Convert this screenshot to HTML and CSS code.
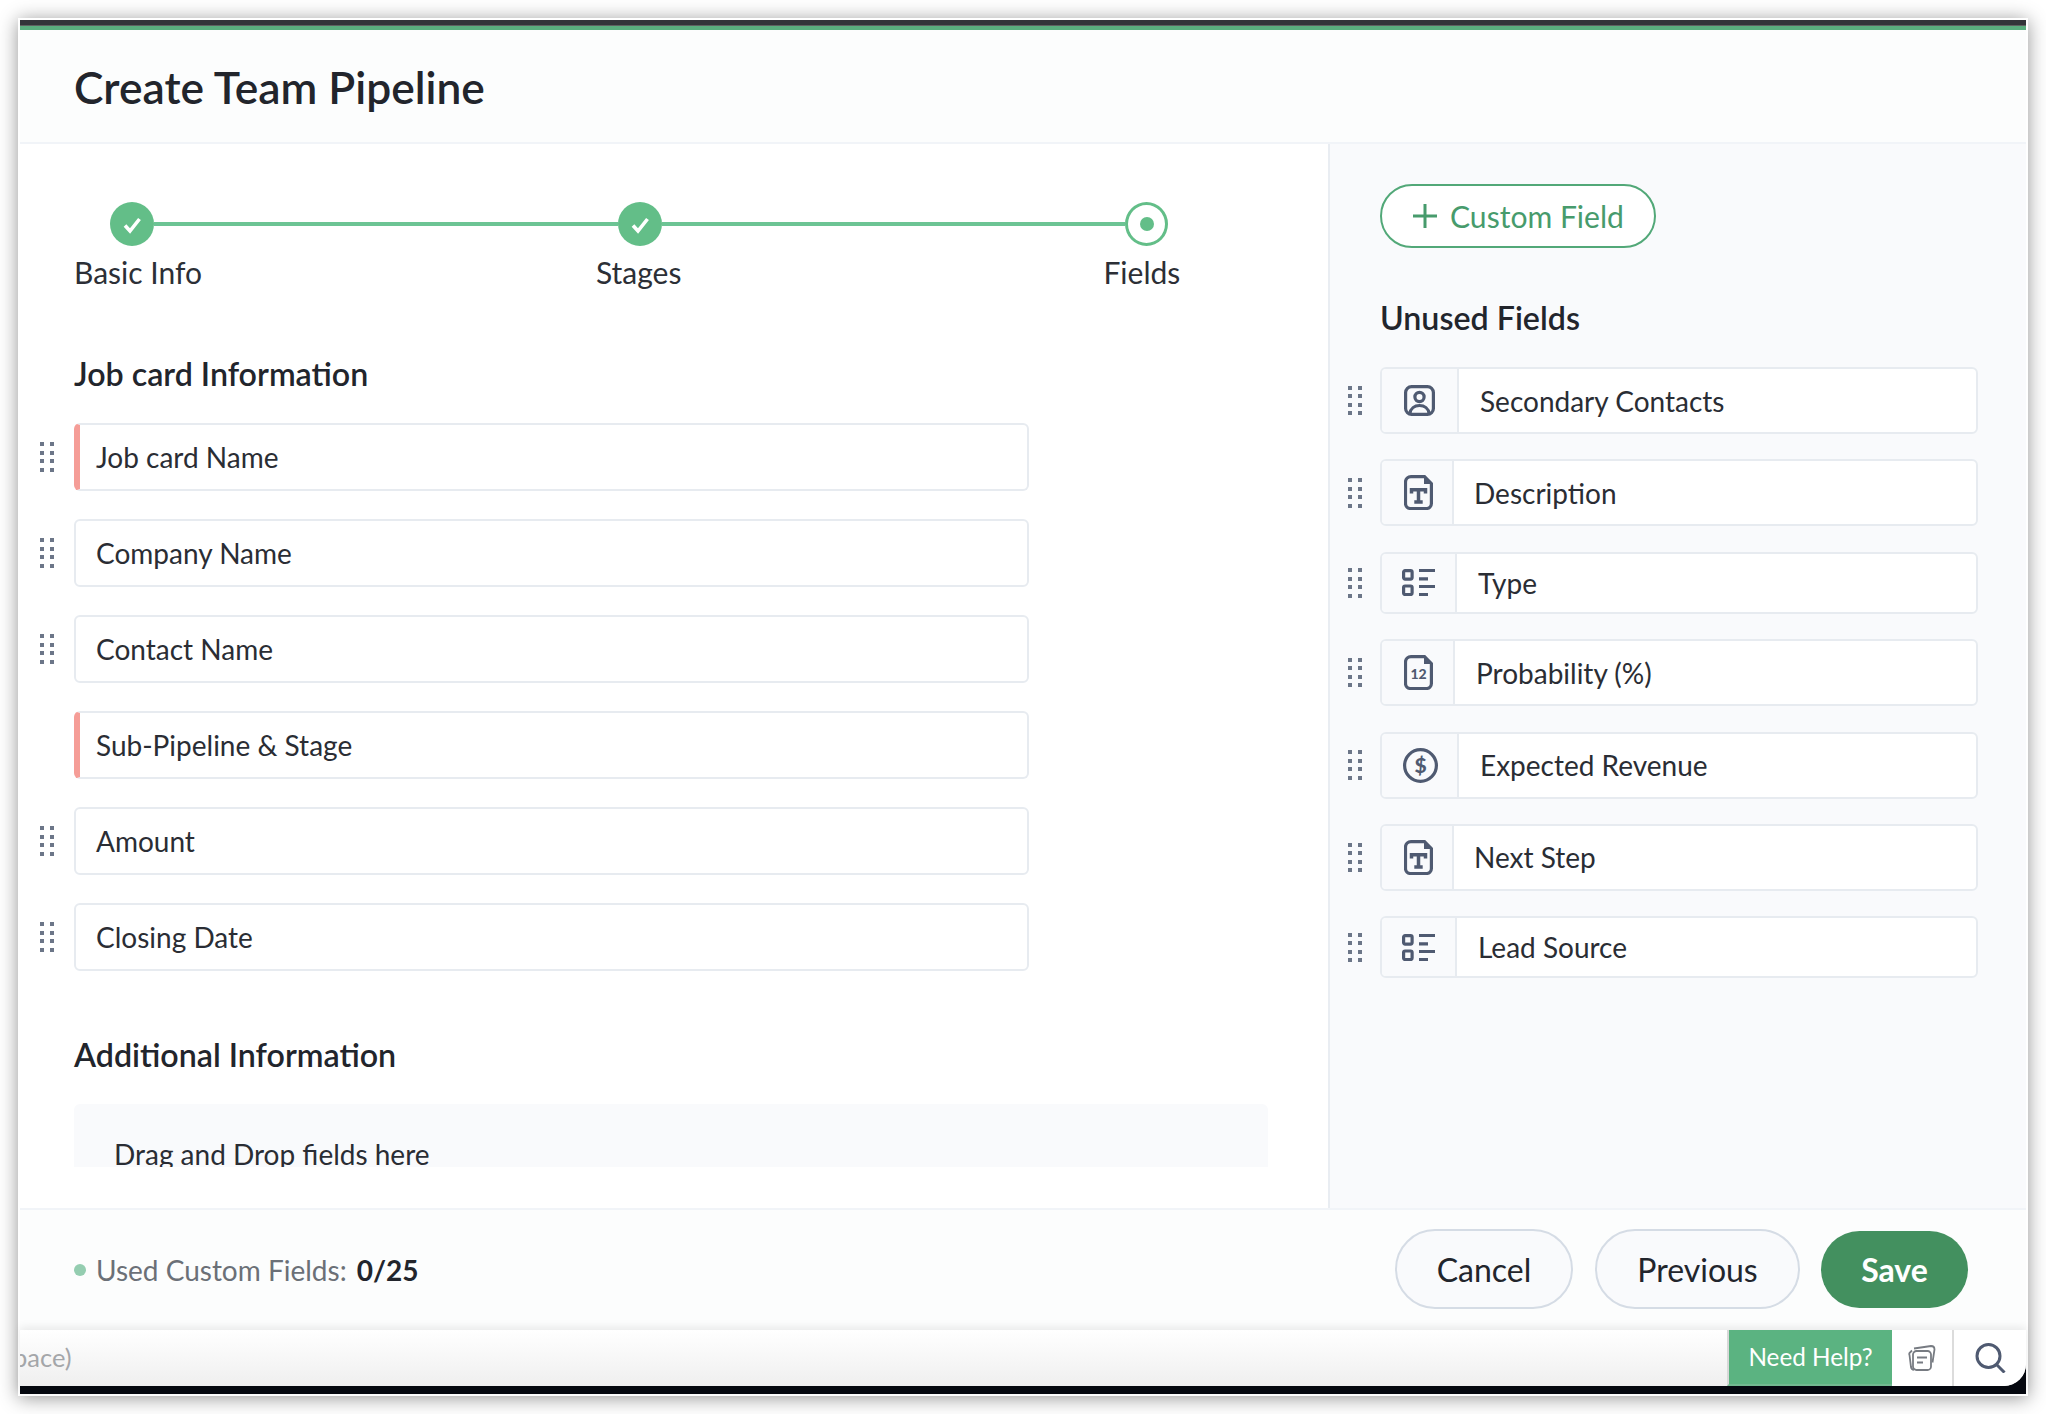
FILE: index.html
```html
<!DOCTYPE html>
<html lang="en">
<head>
<meta charset="utf-8">
<title>Create Team Pipeline</title>
<link rel="stylesheet" href="styles.css">
</head>
<body>
<div class="window">
  <div class="top-strip"></div>
  <header class="header"><h1 class="title">Create Team Pipeline</h1></header>
  <div class="content">
    <main class="main">
      <div class="steps">
        <span class="step"><svg class="step-check" viewBox="0 0 44 44" width="44" height="44"><path d="M15 23.5l5 5.5 9.5-12" fill="none" stroke="#fff" stroke-width="3.6"/></svg></span>
        <span class="step-line"></span>
        <span class="step"><svg class="step-check" viewBox="0 0 44 44" width="44" height="44"><path d="M15 23.5l5 5.5 9.5-12" fill="none" stroke="#fff" stroke-width="3.6"/></svg></span>
        <span class="step-line"></span>
        <span class="step-current"><span class="step-dot"></span></span>
      </div>
      <div class="step-labels">
        <span class="label-basic">Basic Info</span>
        <span class="label-stages">Stages</span>
        <span class="label-fields">Fields</span>
      </div>
      <h2 class="section-title first">Job card Information</h2>
      <div class="field-list">
        <div class="field-row"><span class="handle"><i></i><i></i><i></i><i></i><i></i><i></i><i></i><i></i></span><div class="field required">Job card Name</div></div>
        <div class="field-row"><span class="handle"><i></i><i></i><i></i><i></i><i></i><i></i><i></i><i></i></span><div class="field">Company Name</div></div>
        <div class="field-row"><span class="handle"><i></i><i></i><i></i><i></i><i></i><i></i><i></i><i></i></span><div class="field">Contact Name</div></div>
        <div class="field-row"><span class="handle no-handle"></span><div class="field required">Sub-Pipeline &amp; Stage</div></div>
        <div class="field-row"><span class="handle"><i></i><i></i><i></i><i></i><i></i><i></i><i></i><i></i></span><div class="field">Amount</div></div>
        <div class="field-row"><span class="handle"><i></i><i></i><i></i><i></i><i></i><i></i><i></i><i></i></span><div class="field">Closing Date</div></div>
      </div>
      <h2 class="section-title second">Additional Information</h2>
      <div class="dropzone">Drag and Drop fields here</div>
    </main>
    <aside class="side">
      <button class="custom-btn" type="button">
        <svg viewBox="0 0 24 24" width="24" height="24"><path d="M12 0v24M0 12h24" stroke="#479b6c" stroke-width="3" fill="none"/></svg>
        Custom Field
      </button>
      <h2 class="side-title">Unused Fields</h2>
      <div class="unused-list">
        <div class="unused-row tall"><span class="handle"><i></i><i></i><i></i><i></i><i></i><i></i><i></i><i></i></span>
          <div class="unused"><span class="cell w78"><svg viewBox="0 0 31 31" width="31" height="31" fill="none" stroke="#4f5a71" stroke-width="3.2"><rect x="1.6" y="1.6" width="27.800" height="27.800" rx="6"/><circle cx="15.5" cy="12" r="4.6"/><path d="M6 28.5c.5-5 4.5-8 9.500-8s9 3 9.500 8"/></svg></span><span class="name">Secondary Contacts</span></div></div>
        <div class="unused-row tall"><span class="handle"><i></i><i></i><i></i><i></i><i></i><i></i><i></i><i></i></span>
          <div class="unused"><span class="cell w72"><svg viewBox="0 0 29 35" width="29" height="35" fill="none" stroke="#4f5a71" stroke-width="3.2"><path d="M7 1.600h13.500l6.900 7V28.500a5 5 0 0 1-5 5H6.500a5 5 0 0 1-5-5V7a5.500 5.500 0 0 1 5.500-5.400z"/><path d="M20 1l8 8h-8z" fill="#4f5a71" stroke="none"/><path d="M7.500 18.500v-3.700h14v3.700M14.500 14.800V27M10.300 27h8.400" stroke-width="3.500"/></svg></span><span class="name">Description</span></div></div>
        <div class="unused-row short"><span class="handle"><i></i><i></i><i></i><i></i><i></i><i></i><i></i><i></i></span>
          <div class="unused"><span class="cell w76"><svg viewBox="0 0 33 27" width="33" height="27" fill="none" stroke="#4f5a71" stroke-width="3.200"><rect x="1.600" y="1.600" width="8.500" height="8.500" rx="1.500"/><rect x="1.600" y="17" width="8.500" height="8.500" rx="1.500"/><path d="M17 1.500h16M17 9.800h9M17 17.500h16M17 25.500h9"/></svg></span><span class="name">Type</span></div></div>
        <div class="unused-row tall"><span class="handle"><i></i><i></i><i></i><i></i><i></i><i></i><i></i><i></i></span>
          <div class="unused"><span class="cell w74"><svg viewBox="0 0 29 35" width="29" height="35" fill="none" stroke="#4f5a71" stroke-width="3.2"><path d="M7 1.600h13.500l6.900 7V28.500a5 5 0 0 1-5 5H6.500a5 5 0 0 1-5-5V7a5.500 5.500 0 0 1 5.500-5.400z"/><path d="M20 1l8 8h-8z" fill="#4f5a71" stroke="none"/><text class="icon-num" x="14.500" y="23.500" text-anchor="middle">12</text></svg></span><span class="name">Probability (%)</span></div></div>
        <div class="unused-row tall"><span class="handle"><i></i><i></i><i></i><i></i><i></i><i></i><i></i><i></i></span>
          <div class="unused"><span class="cell w78 shifted"><svg viewBox="0 0 35 35" width="35" height="35" fill="none" stroke="#4f5a71" stroke-width="3.2"><circle cx="17.500" cy="17.500" r="15.900"/><text class="icon-dollar" x="17.500" y="25" text-anchor="middle">$</text></svg></span><span class="name">Expected Revenue</span></div></div>
        <div class="unused-row tall"><span class="handle"><i></i><i></i><i></i><i></i><i></i><i></i><i></i><i></i></span>
          <div class="unused"><span class="cell w72"><svg viewBox="0 0 29 35" width="29" height="35" fill="none" stroke="#4f5a71" stroke-width="3.2"><path d="M7 1.600h13.500l6.900 7V28.500a5 5 0 0 1-5 5H6.500a5 5 0 0 1-5-5V7a5.500 5.500 0 0 1 5.500-5.400z"/><path d="M20 1l8 8h-8z" fill="#4f5a71" stroke="none"/><path d="M7.500 18.500v-3.700h14v3.700M14.500 14.800V27M10.300 27h8.400" stroke-width="3.500"/></svg></span><span class="name">Next Step</span></div></div>
        <div class="unused-row short"><span class="handle"><i></i><i></i><i></i><i></i><i></i><i></i><i></i><i></i></span>
          <div class="unused"><span class="cell w76"><svg viewBox="0 0 33 27" width="33" height="27" fill="none" stroke="#4f5a71" stroke-width="3.200"><rect x="1.600" y="1.600" width="8.500" height="8.500" rx="1.500"/><rect x="1.600" y="17" width="8.500" height="8.500" rx="1.500"/><path d="M17 1.500h16M17 9.800h9M17 17.500h16M17 25.500h9"/></svg></span><span class="name">Lead Source</span></div></div>
      </div>
    </aside>
  </div>
  <footer class="footer">
    <div class="usage"><span class="usage-dot"></span><span class="usage-label">Used Custom Fields:</span><strong class="usage-count">0/25</strong></div>
    <div class="actions">
      <button class="btn btn-cancel" type="button">Cancel</button>
      <button class="btn btn-prev" type="button">Previous</button>
      <button class="btn btn-save" type="button">Save</button>
    </div>
  </footer>
  <div class="taskbar">
    <div class="bar">
      <span class="bar-text">pace)</span>
      <span class="help">Need Help?</span>
      <span class="bar-icon notes"><svg viewBox="0 0 28 26" width="28" height="26" fill="none" stroke="#777b82" stroke-width="1.800"><path d="M6 3.500l17-2.500q3.500 0 3.500 3.500l-2 13"/><path d="M4 5.500 1.500 8q-.5 1 0 2l1.500 12q.5 2.500 3 2.800"/><rect x="5" y="6" width="18" height="19" rx="3.500" fill="#fff"/><path d="M9 12.500h10M9 17.500h6"/></svg></span>
      <span class="bar-icon search"><svg viewBox="0 0 31 30" width="31" height="30" fill="none" stroke="#4f5a71" stroke-width="3"><circle cx="13.500" cy="13" r="11.500"/><path d="M21.500 21.500l8 8"/></svg></span>
    </div>
  </div>
</div>
</body>
</html>
```
FILE: styles.css
```css
* { box-sizing: border-box; }
html, body { margin: 0; height: 100%; }
body {
  padding: 18px 18px 0;
  background: #fff;
  font-family: Lato, "Liberation Sans", sans-serif;
  color: #22252c;
  overflow: hidden;
}
.window {
  width: 2010px;
  height: 1378px;
  border: 2px solid #fff;
  background: #fff;
  display: flex;
  flex-direction: column;
  box-shadow: 0 2px 18px rgba(0, 0, 0, .42);
}
.top-strip {
  height: 10px;
  flex: none;
  background: linear-gradient(#333438 0, #333438 5px, #5f6060 5px, #5f6060 6px, #5aad7d 6px);
}
.header {
  height: 114px;
  flex: none;
  background: #fcfdfd;
  border-bottom: 2px solid #f1f4f8;
  padding-left: 54px;
  display: flex;
  align-items: center;
}
.title { margin: 0; font-size: 44.300px; font-weight: 600; color: #22252c; }
.content { flex: 1; display: flex; min-height: 0; }
.main { width: 1308px; flex: none; padding: 58px 0 0 20px; background: #fff; }
.steps { display: flex; align-items: center; margin-left: 70px; width: 1058px; height: 44px; }
.step { width: 44px; height: 44px; border-radius: 50%; background: #63be88; flex: none; display: block; }
.step-check { display: block; }
.step-line { height: 4px; flex: 1; background: #6cc494; }
.step-current {
  width: 43px; height: 44px; border-radius: 50%; flex: none;
  border: 3.500px solid #63be88; background: #fff;
  display: flex; align-items: center; justify-content: center;
}
.step-dot { width: 14px; height: 14px; border-radius: 50%; background: #63be88; }
.step-labels { display: flex; margin: 8px 0 0 34px; font-size: 30px; line-height: 36px; color: #2c2f36; }
.label-stages { margin-left: 394px; }
.label-fields { margin-left: 422px; }
.section-title { margin: 0 0 0 34px; font-size: 32.200px; line-height: 40px; font-weight: 600; color: #22252c; }
.section-title.first { margin-top: 64px; }
.section-title.second { margin-top: 64px; }
.field-list { display: flex; flex-direction: column; gap: 28px; margin-top: 29px; }
.field-row { display: flex; align-items: center; gap: 20px; }
.handle {
  width: 14px; flex: none; display: grid;
  grid-template-columns: 4px 4px; grid-auto-rows: 4px;
  column-gap: 6px; row-gap: 4.500px;
}
.handle i { background: #6c7688; display: block; }
.field {
  width: 955px; height: 68px; flex: none;
  border: 2px solid #e7ebf0; border-radius: 6px;
  background: #fff;
  padding-left: 20px;
  display: flex; align-items: center;
  font-size: 28px; color: #2a2d34;
}
.field.required { border-left: 6px solid #f59d97; padding-left: 16px; }
.dropzone {
  margin: 29px 0 0 34px;
  width: 1194px; height: 63px;
  background: #f9fafc;
  border-radius: 6px 6px 0 0;
  padding: 32px 0 0 40px;
  line-height: 36px;
  font-size: 28px;
  color: #2a2d34;
  overflow: hidden;
}
.side {
  flex: 1;
  border-left: 2px solid #e9edf2;
  background: #f9fafc;
  padding: 40px 0 0 18px;
}
.custom-btn {
  margin-left: 32px;
  width: 276px; height: 64px;
  border: 2.500px solid #52a878; border-radius: 32px;
  background: #fff;
  color: #479b6c;
  font: 400 30.100px Lato, "Liberation Sans", sans-serif;
  display: flex; align-items: center; gap: 13px;
  padding: 0 0 0 31px;
}
.side-title { margin: 52px 0 0 32px; font-size: 32.200px; line-height: 36px; font-weight: 600; color: #22252c; }
.unused-list { display: flex; flex-direction: column; gap: 25.400px; margin-top: 31px; }
.unused-row { display: flex; align-items: center; gap: 18px; }
.unused-row.tall { height: 67px; }
.unused-row.short { height: 62px; }
.unused {
  width: 598px; height: 100%; flex: none;
  border: 2px solid #e7ebf0; border-radius: 6px;
  background: #fff;
  display: flex; overflow: hidden;
}
.cell {
  flex: none;
  background: #f9fafc;
  border-right: 2px solid #e7ebf0;
  display: flex; align-items: center; justify-content: center;
}
.w72 { width: 72px; padding-left: 2px; }
.w74 { width: 73px; padding-left: 2px; }
.w76 { width: 75px; }
.w78 { width: 77px; }
.shifted { padding-left: 2px; }
.name { display: flex; align-items: center; padding-left: 21px; font-size: 28px; color: #2a2d34; }
.w72 + .name { padding-left: 20px; }
.icon-num { font: 900 14px Lato, "Liberation Sans", sans-serif; fill: #4f5a71; stroke: none; }
.icon-dollar { font: 900 21px Lato, "Liberation Sans", sans-serif; fill: #4f5a71; stroke: none; }
.footer {
  height: 122px; flex: none;
  background: #fcfdfd;
  border-top: 2px solid #f1f4f8;
  padding: 0 58px 2px 54px;
  display: flex; align-items: center; justify-content: space-between;
}
.usage { display: flex; align-items: center; font-size: 28px; padding-top: 2px; }
.usage-dot { width: 12px; height: 12px; border-radius: 50%; background: #94cdb0; margin-right: 10px; }
.usage-label { color: #6b7077; }
.usage-count { margin-left: 10px; font-weight: 700; color: #22252c; }
.actions { display: flex; align-items: center; }
.btn {
  height: 80px; border-radius: 40px;
  border: 2.500px solid #d5dce5;
  background: #f9fafc;
  font: 400 32px Lato, "Liberation Sans", sans-serif;
  color: #22252c;
  padding: 0;
}
.btn-cancel { width: 178px; }
.btn-prev { width: 205px; margin-left: 22px; }
.btn-save { width: 147px; height: 77px; margin-left: 21px; border: 0; background: #43905f; color: #fff; font-weight: 700; }
.taskbar {
  height: 64px; flex: none;
  background: #05080f;
  position: relative;
  box-shadow: 0 -3px 8px rgba(0, 0, 0, .08);
}
.bar {
  height: 56px;
  background: linear-gradient(#fff, #efefef);
  border-bottom-right-radius: 22px;
  display: flex; align-items: stretch;
  overflow: hidden;
}
.bar-text { flex: 1; margin-left: -7px; padding-bottom: 2px; display: flex; align-items: center; font-size: 25.500px; color: #a4a6a9; }
.help {
  width: 165px;
  background: #5bb381;
  border-left: 2px solid #d8d8d8;
  border-bottom: 2px solid #72b990;
  color: #fff;
  font-size: 24.300px;
  padding-bottom: 2px;
  display: flex; align-items: center; justify-content: center;
}
.bar-icon { background: #fff; display: flex; align-items: center; justify-content: center; }
.notes { width: 62px; border-right: 2px solid #dcdcdc; }
.search { width: 72px; }
```
